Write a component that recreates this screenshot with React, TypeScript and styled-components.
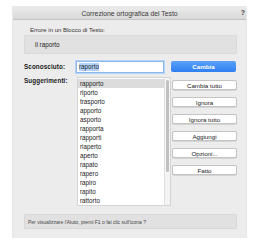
import React from "react";
import styled, { createGlobalStyle } from "styled-components";

const Global = createGlobalStyle`
  html, body { margin: 0; padding: 0; background: #ffffff; }
  body { font-family: "Liberation Sans", Arial, sans-serif; color: #222; }
`;

const Page = styled.div`
  padding: 7px 0 0 13px;
`;

const Dialog = styled.div`
  width: 233px;
  height: 231px;
  background: #ececec;
  box-shadow: 0 0 0 0.5px #d0d0d0;
  display: flex;
  flex-direction: column;
  box-sizing: border-box;
`;

const TitleBar = styled.div`
  height: 12px;
  background: linear-gradient(#ebebeb, #d9d9d9);
  border-bottom: 1px solid #c4c4c4;
  display: flex;
  align-items: center;
  justify-content: center;
  position: relative;
  font-size: 6.8px;
  color: #3a3a3a;
`;

const HelpIcon = styled.span`
  position: absolute;
  right: 1px;
  top: 2px;
  font-size: 7px;
  font-weight: bold;
  color: #444;
`;

const Body = styled.div`
  padding: 6px 9px 0 11px;
  display: flex;
  flex-direction: column;
  flex: 1;
`;

const SmallLabel = styled.div`
  font-size: 6px;
  color: #333;
  padding-left: 6px;
  height: 8px;
  line-height: 8px;
`;

const ErrorBox = styled.div`
  margin-top: 1px;
  height: 19px;
  background: #e1e1e1;
  border: 1px solid #dadada;
  box-sizing: border-box;
  border-radius: 1px;
  display: flex;
  align-items: center;
  padding-left: 10px;
  font-size: 6.3px;
  color: #222;
`;

const Row = styled.div<{ $top: number }>`
  display: flex;
  margin-top: ${(p) => p.$top}px;
`;

const FieldLabel = styled.div<{ $lh: number }>`
  width: 52px;
  font-size: 6.3px;
  color: #222;
  letter-spacing: 0.1px;
  font-weight: 600;
  line-height: ${(p) => p.$lh}px;
`;

const Input = styled.div`
  width: 88px;
  height: 12px;
  box-sizing: border-box;
  background: #fff;
  border: 1px solid #8bb6ee;
  box-shadow: 0 0 0 1px #b8d3f6;
  display: flex;
  align-items: center;
  padding-left: 2px;
  font-size: 6.3px;
`;

const Selected = styled.span`
  background: #b3d3fc;
  line-height: 8px;
`;

const Button = styled.div<{ $primary?: boolean }>`
  width: 65px;
  height: ${(p) => (p.$primary ? 11 : 10)}px;
  box-sizing: border-box;
  border-radius: 2px;
  display: flex;
  align-items: center;
  justify-content: center;
  font-size: 6.2px;
  background: ${(p) => (p.$primary ? "linear-gradient(#5aa1f8, #2f7ff2)" : "#ffffff")};
  color: ${(p) => (p.$primary ? "#ffffff" : "#222")};
  font-weight: ${(p) => (p.$primary ? "bold" : "normal")};
  border: ${(p) => (p.$primary ? "none" : "0.5px solid #c4c4c4")};
  box-shadow: ${(p) => (p.$primary ? "none" : "0 0.5px 0 #bbbbbb")};
`;

const Spacer = styled.div<{ $w: number }>`
  width: ${(p) => p.$w}px;
  flex: none;
`;

const ListWrap = styled.div`
  width: 94px;
  height: 129px;
  background: #fff;
  display: flex;
  box-sizing: border-box;
  border: 0.5px solid #d4d4d4;
  margin-left: 1px;
`;

const List = styled.div`
  flex: 1;
  display: flex;
  flex-direction: column;
  padding-top: 1px;
`;

const Item = styled.div<{ $sel?: boolean }>`
  height: 9px;
  line-height: 9px;
  font-size: 6.3px;
  padding-left: 2px;
  color: #222;
  background: ${(p) => (p.$sel ? "#dcdcdc" : "transparent")};
`;

const ScrollTrack = styled.div`
  width: 6px;
  background: #f4f4f4;
  border-left: 0.5px solid #e0e0e0;
  padding: 2px 1px;
  box-sizing: border-box;
`;

const Thumb = styled.div`
  height: 92px;
  background: #c1c1c1;
  border-radius: 2px;
`;

const ButtonCol = styled.div`
  display: flex;
  flex-direction: column;
  gap: 7px;
  padding-top: 3px;
  margin-left: 1px;
`;

const HelpBar = styled.div`
  margin-top: 8px;
  height: 15px;
  background: #e1e1e1;
  border: 0.5px solid #d8d8d8;
  box-sizing: border-box;
  border-radius: 1px;
  display: flex;
  align-items: center;
  padding-left: 3px;
  font-size: 5px;
  color: #444;
`;

const suggestions = [
  "rapporto",
  "riporto",
  "trasporto",
  "apporto",
  "asporto",
  "rapporta",
  "rapporti",
  "riaperto",
  "aperto",
  "rapato",
  "rapero",
  "rapiro",
  "rapito",
  "rattorto",
];

const buttons = ["Cambia tutto", "Ignora", "Ignora tutto", "Aggiungi", "Opzioni...", "Fatto"];

export default function App() {
  return (
    <Page>
      <Global />
      <Dialog>
        <TitleBar>
          Correzione ortografica del Testo
          <HelpIcon>?</HelpIcon>
        </TitleBar>
        <Body>
          <SmallLabel>Errore in un Blocco di Testo:</SmallLabel>
          <ErrorBox>il raporto</ErrorBox>
          <Row $top={7}>
            <FieldLabel $lh={12}>Sconosciuto:</FieldLabel>
            <Input>
              <Selected>raporto</Selected>
            </Input>
            <Spacer $w={7} />
            <Button $primary>Cambia</Button>
          </Row>
          <Row $top={4}>
            <FieldLabel $lh={8}>Suggerimenti:</FieldLabel>
            <ListWrap>
              <List>
                {suggestions.map((s, i) => (
                  <Item key={s} $sel={i === 0}>
                    {s}
                  </Item>
                ))}
              </List>
              <ScrollTrack>
                <Thumb />
              </ScrollTrack>
            </ListWrap>
            <ButtonCol>
              {buttons.map((b) => (
                <Button key={b}>{b}</Button>
              ))}
            </ButtonCol>
          </Row>
          <HelpBar>Per visualizzare l'Aiuto, premi F1 o fai clic sull'icona ?</HelpBar>
        </Body>
      </Dialog>
    </Page>
  );
}
